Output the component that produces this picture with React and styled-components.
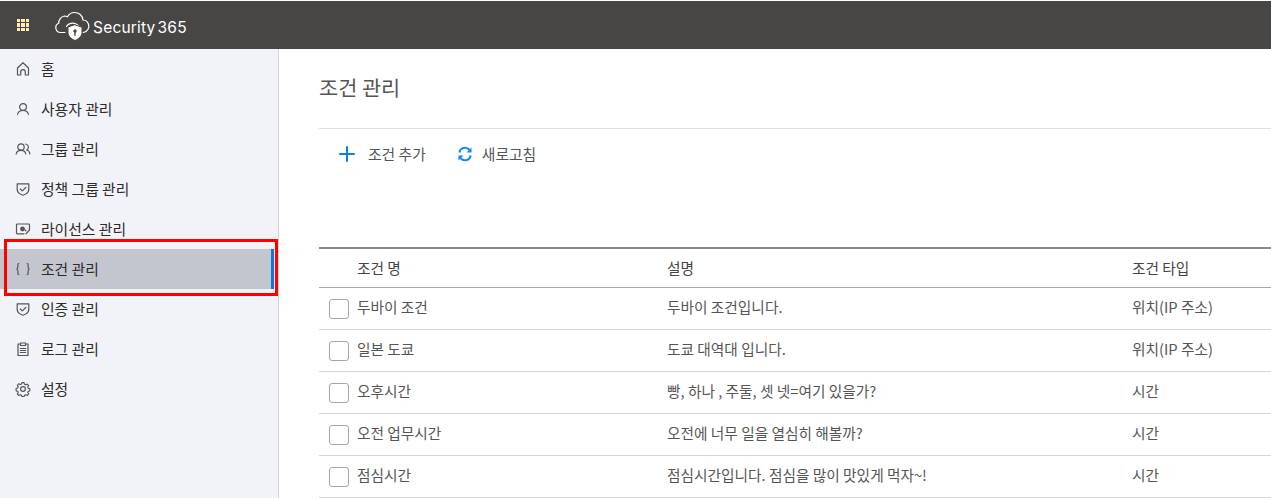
import React from 'react'
import styled, { createGlobalStyle } from 'styled-components'
import { Plus } from 'lucide-react'

const GlobalStyle = createGlobalStyle`
  html, body { margin: 0; padding: 0; background: #fff; overflow: hidden; }
  body { font-family: "Noto Sans CJK KR", "Noto Sans", sans-serif; }
`

// sidebar icons, all on a 16 box
const Ico = ({ children }) => (
  <svg width="16" height="16" viewBox="0 0 16 16" fill="none" stroke="currentColor" strokeWidth="1.2" strokeLinejoin="round" strokeLinecap="round">
    {children}
  </svg>
)

const HomeIcon = () => (
  <Ico><path d="M2.500 14V7L8 1.800 13.500 7v7h-3.200v-3a2.300 2.300 0 0 0-4.600 0v3z" /></Ico>
)
const UserIcon = () => (
  <Ico>
    <circle cx="8" cy="6" r="3.400" />
    <path d="M2.500 13.500C3 11 5 9.500 8 9.500s5 1.500 5.500 4" />
  </Ico>
)
const UsersIcon = () => (
  <Ico>
    <circle cx="6" cy="6" r="3.200" />
    <path d="M1.200 13c.4-2.300 2.200-3.600 4.800-3.600s4.400 1.300 4.800 3.600" />
    <path d="M10.500 3a3.200 3.200 0 0 1 1.200 6c1.800.4 2.900 1.800 3.200 3.800" />
  </Ico>
)
const ShieldIcon = () => (
  <Ico>
    <path d="M2.200 2.800h11.600v5.700c0 3-2.800 4.700-5.800 5.700-3-1-5.800-2.700-5.800-5.700z" />
    <path d="M5.300 8l2 1.900 3.500-3.400" />
  </Ico>
)
const LicenseIcon = () => (
  <Ico>
    <path d="M9 12.800H2.300a.8.8 0 0 1-.8-.8V3.800a.8.8 0 0 1 .8-.8h11.400a.8.8 0 0 1 .8.8V9l-3.500 3.800" />
    <circle cx="7.500" cy="8" r="1.800" fill="currentColor" />
    <path d="M10 8.800l1 1" />
  </Ico>
)
const BracesIcon = () => (
  <Ico>
    <path d="M3.800 2.500C2.700 2.500 2.900 4 2.900 5.500c0 1.500-.2 2-1 2.500.8.500 1 1 1 2.500s-.2 3 .9 3" />
    <path d="M12.200 2.500c1.100 0 .9 1.500.9 3 0 1.500.2 2 1 2.500-.8.500-1 1-1 2.500s.2 3-.9 3" />
  </Ico>
)
const ClipboardIcon = () => (
  <Ico>
    <path d="M5.500 3H3v11.500h10V3h-2.500" />
    <path d="M5.500 2h5v2.500h-5z" />
    <path d="M5.300 7.500h5.400M5.300 9.500h5.400M5.300 11.500h5.400" />
  </Ico>
)
const GearIcon = () => (
  <Ico>
    <circle cx="8" cy="8" r="2.400" />
    <path d="M6.800 1.500h2.400l.4 1.800 1.300.6 1.600-.9 1.600 1.700-1 1.500.6 1.400 1.700.4v2.300l-1.700.4-.6 1.400 1 1.500-1.600 1.700-1.600-.9-1.300.6-.4 1.400H6.800l-.4-1.400-1.300-.6-1.600.9-1.600-1.700 1-1.500-.6-1.400-1.700-.4V7.600l1.700-.4.6-1.400-1-1.500 1.600-1.700 1.600.9 1.300-.6z" transform="translate(8 8) scale(.93) translate(-8 -8.300)" />
  </Ico>
)

const RefreshIcon = () => (
  <svg width="16" height="16" viewBox="0 0 16 16" fill="none" stroke="#0f8ae6" strokeWidth="2">
    <path d="M2.300 6.500A5.800 5.800 0 0 1 12.500 3.800" />
    <path d="M13.700 9.500A5.800 5.800 0 0 1 3.500 12.200" />
    <path d="M14.500 1.500v5h-5z" fill="#0f8ae6" stroke="none" />
    <path d="M1.500 14.500v-5h5z" fill="#0f8ae6" stroke="none" />
  </svg>
)

const Logo = () => (
  <svg width="38" height="30" viewBox="0 0 38 30" fill="none" stroke="#fff" strokeWidth="1.200" strokeLinecap="round">
    <path d="M11 21.500H6.500a4.800 4.800 0 0 1-1.800-9.200A7 7 0 0 1 10.500 5a6 6 0 0 1 3 .8C15 3 18 1.500 20.500 1.500c4.500 0 8 3 8.500 7.500a6.200 6.200 0 0 1 3.500 11c-1 .9-2 1.300-3.500 1.500" />
    <path d="M12.500 15.500c1.500-2.500 5-4 8-3.200 2 .4 3.500 1.500 4.500 3" />
    <path d="M21 13.800l7 2.400v5c0 4-3 6.600-7 8.300-4-1.700-7-4.300-7-8.300v-5z" fill="#fff" stroke="#484644" strokeWidth="1" />
    <circle cx="21" cy="20" r="1.700" fill="#484644" stroke="none" />
    <rect x="20.300" y="20.500" width="1.400" height="4.200" fill="#484644" stroke="none" />
  </svg>
)

const menu = [
  { label: '홈', icon: HomeIcon },
  { label: '사용자 관리', icon: UserIcon },
  { label: '그룹 관리', icon: UsersIcon },
  { label: '정책 그룹 관리', icon: ShieldIcon },
  { label: '라이선스 관리', icon: LicenseIcon },
  { label: '조건 관리', icon: BracesIcon, active: true },
  { label: '인증 관리', icon: ShieldIcon },
  { label: '로그 관리', icon: ClipboardIcon },
  { label: '설정', icon: GearIcon },
]

const rows = [
  ['두바이 조건', '두바이 조건입니다.', '위치(IP 주소)'],
  ['일본 도쿄', '도쿄 대역대 입니다.', '위치(IP 주소)'],
  ['오후시간', '빵, 하나 , 주둘, 셋 넷=여기 있을가?', '시간'],
  ['오전 업무시간', '오전에 너무 일을 열심히 해볼까?', '시간'],
  ['점심시간', '점심시간입니다. 점심을 많이 맛있게 먹자~!', '시간'],
]

export default function App() {
  return (
    <Page>
      <GlobalStyle />
      <Header>
        <Waffle>
          {Array.from({ length: 9 }).map((_, i) => <i key={i} />)}
        </Waffle>
        <Brand>
          <Logo />
          <BrandName>Security 365</BrandName>
        </Brand>
      </Header>
      <Body>
        <Sidebar>
          {menu.map((m) => (
            <MenuItem key={m.label} $active={m.active}>
              <MenuIcon><m.icon /></MenuIcon>
              {m.label}
            </MenuItem>
          ))}
          <Highlight />
        </Sidebar>
        <Main>
          <Title>조건 관리</Title>
          <Toolbar>
            <ToolButton $left={16}>
              <Plus size={24} color="#0f7fd8" strokeWidth={2} />
              <ToolLabel>조건 추가</ToolLabel>
            </ToolButton>
            <ToolButton $left={31}>
              <RefreshIcon />
              <ToolLabel>새로고침</ToolLabel>
            </ToolButton>
          </Toolbar>
          <Table>
            <HeadRow>
              <span />
              <span>조건 명</span>
              <span>설명</span>
              <span>조건 타입</span>
            </HeadRow>
            {rows.map((r) => (
              <Row key={r[0]}>
                <Check />
                <span>{r[0]}</span>
                <span>{r[1]}</span>
                <span>{r[2]}</span>
              </Row>
            ))}
          </Table>
        </Main>
      </Body>
    </Page>
  )
}

const Page = styled.div`
  width: 1271px;
  height: 498px;
  overflow: hidden;
  display: flex;
  flex-direction: column;
  padding-top: 1px;
  box-sizing: border-box;
`

const Header = styled.header`
  height: 48px;
  flex: none;
  background: #484644;
  display: flex;
  align-items: center;
  padding-left: 17px;
`

const Waffle = styled.div`
  width: 12px;
  height: 12px;
  display: grid;
  grid-template-columns: repeat(3, 3.400px);
  grid-auto-rows: 3.400px;
  gap: 0.900px;
  i { background: #ffeeb0; }
`

const Brand = styled.div`
  display: flex;
  align-items: center;
  margin-left: 25px;
  margin-top: 2px;
`

const BrandName = styled.span`
  font-family: "Inter", "Noto Sans", sans-serif;
  font-size: 15.500px;
  color: #fff;
  margin-left: 1px;
  margin-top: 2px;
  word-spacing: -2.500px;
  letter-spacing: 0.200px;
`

const Body = styled.div`
  flex: 1;
  display: flex;
  min-height: 0;
`

const Sidebar = styled.nav`
  position: relative;
  width: 279px;
  flex: none;
  box-sizing: border-box;
  background: #f2f3f8;
  border-right: 1px solid #d4d4d4;
`

const MenuItem = styled.div`
  height: 40px;
  width: 274px;
  box-sizing: border-box;
  display: flex;
  align-items: center;
  padding-left: 15px;
  padding-bottom: 2px;
  font-size: 14.800px;
  color: #2b2b2b;
  background: ${(p) => (p.$active ? '#c3c6ce' : 'transparent')};
  border-right: ${(p) => (p.$active ? '3px solid #0f78d4' : '3px solid transparent')};
  background-clip: padding-box;
`

const MenuIcon = styled.span`
  width: 16px;
  height: 16px;
  margin-right: 10px;
  margin-top: 2px;
  display: flex;
  color: #555;
`

const Highlight = styled.div`
  position: absolute;
  left: 4px;
  top: 190px;
  width: 274px;
  height: 57px;
  box-sizing: border-box;
  border: 3px solid #f00;
  pointer-events: none;
`

const Main = styled.main`
  flex: 1;
  min-width: 0;
  padding-left: 40px;
`

const Title = styled.h1`
  margin: 0;
  height: 80px;
  box-sizing: border-box;
  padding-top: 23px;
  font-size: 20.800px;
  line-height: 30px;
  font-weight: 400;
  color: #555;
  border-bottom: 1px solid #e2e2e2;
`

const Toolbar = styled.div`
  height: 118px;
  display: flex;
  align-items: flex-start;
  padding-top: 13px;
  box-sizing: border-box;
`

const ToolButton = styled.div`
  display: flex;
  align-items: center;
  height: 24px;
  gap: 9px;
  margin-left: ${(p) => p.$left}px;
  font-size: 14.800px;
  color: #555;
`

const ToolLabel = styled.span`
  margin-top: -2px;
`

const Table = styled.div`
  border-top: 2px solid #8a8a8a;
  font-size: 14.700px;
  color: #555;
`

const HeadRow = styled.div`
  display: grid;
  grid-template-columns: 38px 310px 465px 1fr;
  align-items: center;
  height: 39px;
  padding-bottom: 1px;
  box-sizing: border-box;
  border-bottom: 1px solid #a8a8a8;
  color: #444;
`

const Row = styled.div`
  display: grid;
  grid-template-columns: 38px 310px 465px 1fr;
  align-items: center;
  height: 42px;
  padding-bottom: 4px;
  box-sizing: border-box;
  border-bottom: 1px solid #d6d6d6;
`

const Check = styled.div`
  width: 20px;
  height: 20px;
  margin-left: 10px;
  margin-top: 4px;
  box-sizing: border-box;
  border: 1px solid #a6a6a6;
  border-radius: 3px;
  background: #fff;
`
